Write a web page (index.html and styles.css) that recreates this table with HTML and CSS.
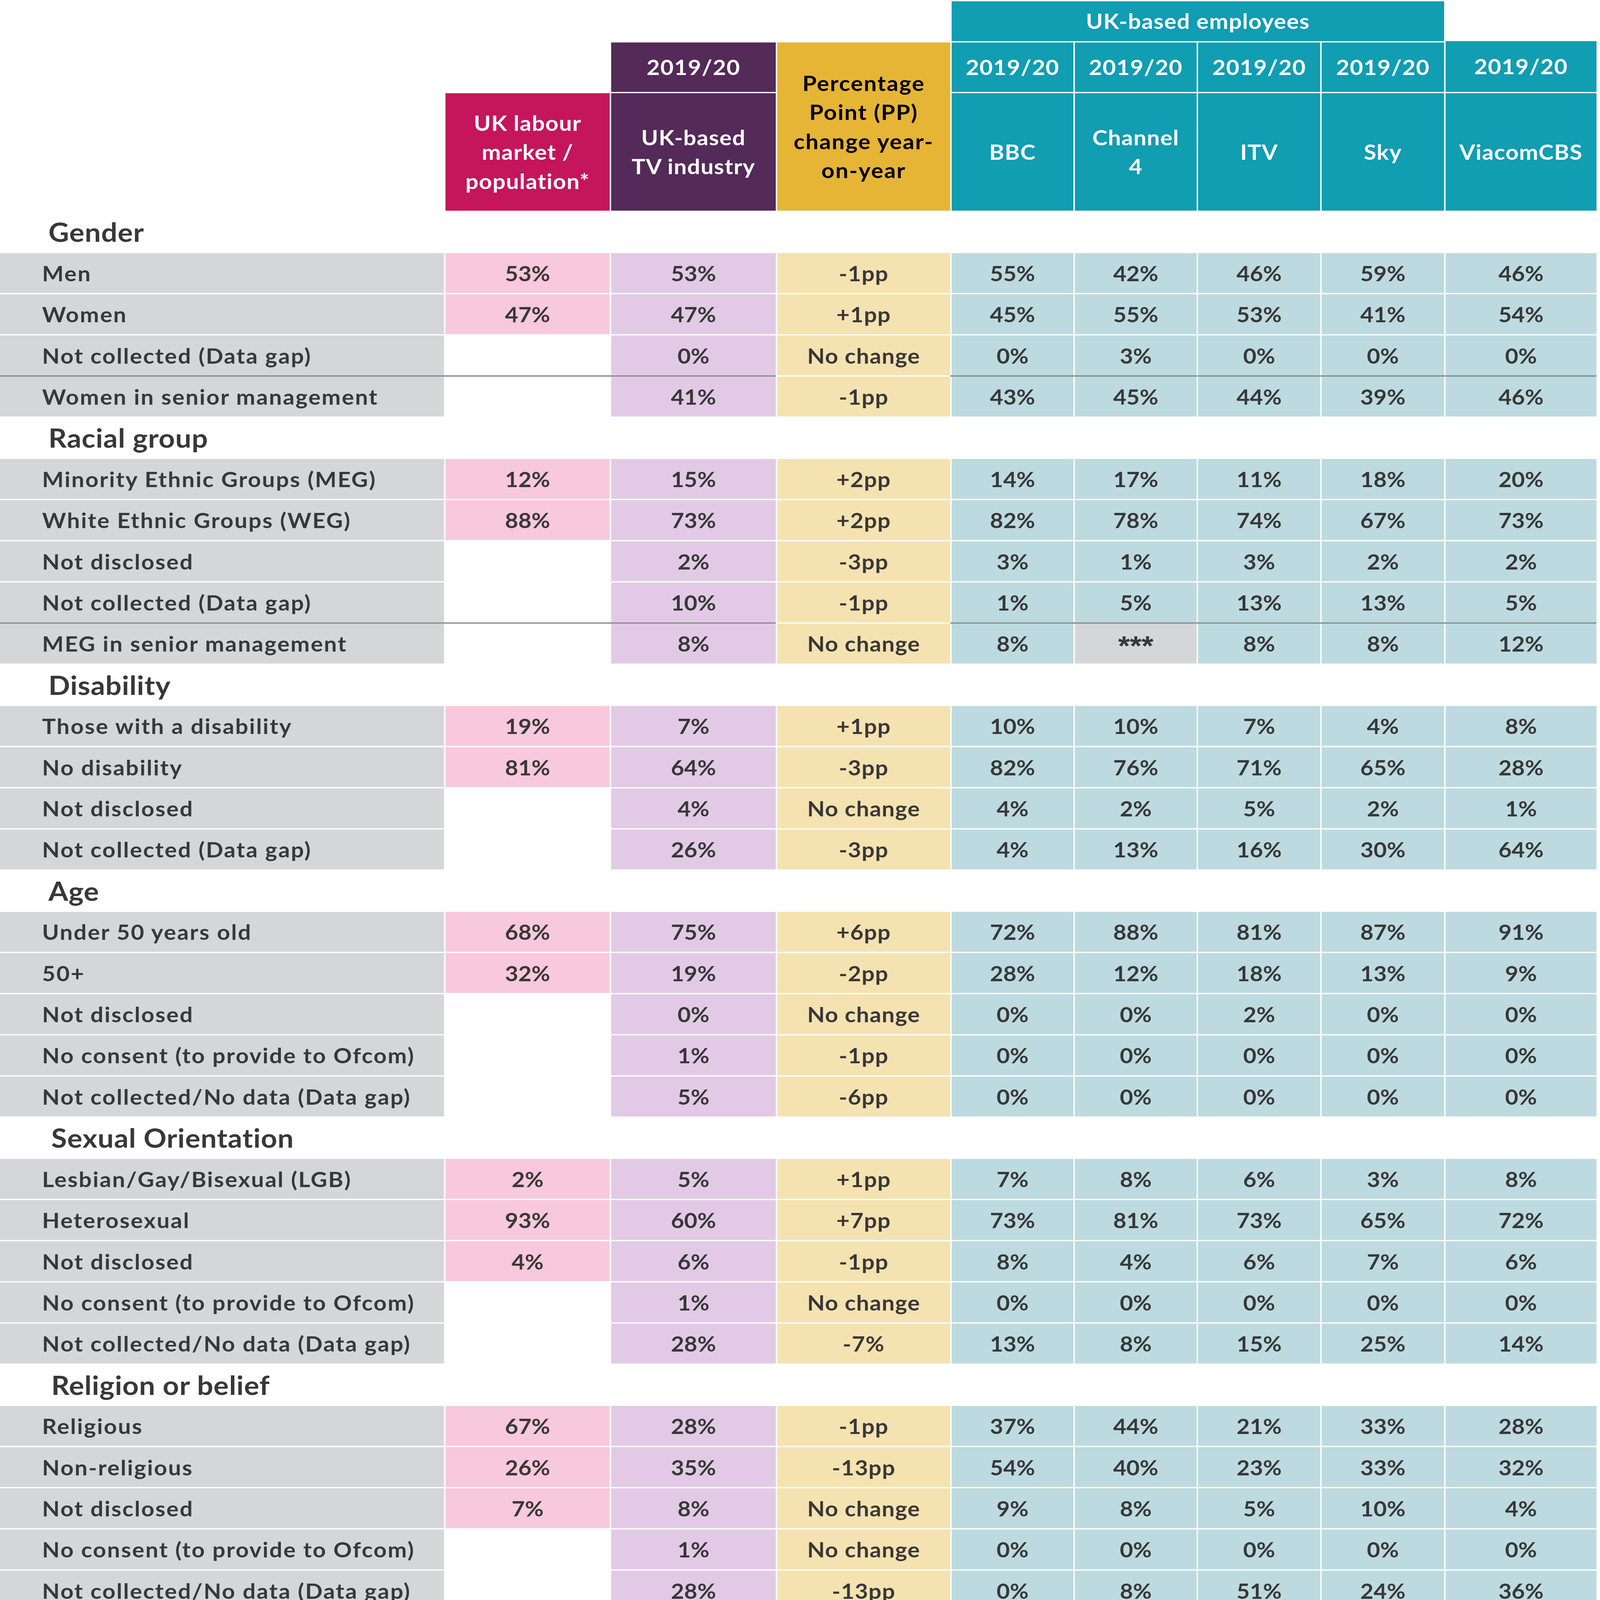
FILE: index.html
```html
<!DOCTYPE html>
<html lang="en">
<head>
<meta charset="utf-8">
<title>UK-based TV industry diversity 2019/20</title>
<link rel="stylesheet" href="styles.css">
</head>
<body>
<div class="frame">
<div class="sheet">
  <div class="head">
    <div class="hc teal h-emp">UK-based employees</div>
    <div class="hc plum h-y3">2019/20</div>
    <div class="hc gold h-pp">Percentage<br>Point (PP)<br>change year-<br>on-year</div>
    <div class="hc teal h-y5">2019/20</div>
    <div class="hc teal h-y6">2019/20</div>
    <div class="hc teal h-y7">2019/20</div>
    <div class="hc teal h-y8">2019/20</div>
    <div class="hc teal h-y9">2019/20</div>
    <div class="hc rose h-t2">UK labour<br>market /<br>population*</div>
    <div class="hc plum h-t3">UK-based<br>TV industry</div>
    <div class="hc teal h-t5">BBC</div>
    <div class="hc teal h-t6">Channel<br>4</div>
    <div class="hc teal h-t7">ITV</div>
    <div class="hc teal h-t8">Sky</div>
    <div class="hc teal h-t9">ViacomCBS</div>
  </div>

  <div class="body">
    <div class="sec sec-a">Gender</div>
    <div class="c lab">Men</div><div class="c pk">53%</div><div class="c pu">53%</div><div class="c ye">-1pp</div><div class="c te">55%</div><div class="c te">42%</div><div class="c te">46%</div><div class="c te">59%</div><div class="c te">46%</div>
    <div class="c lab">Women</div><div class="c pk">47%</div><div class="c pu">47%</div><div class="c ye">+1pp</div><div class="c te">45%</div><div class="c te">55%</div><div class="c te">53%</div><div class="c te">41%</div><div class="c te">54%</div>
    <div class="c lab">Not collected (Data gap)</div><div class="c em"></div><div class="c pu">0%</div><div class="c ye">No change</div><div class="c te">0%</div><div class="c te">3%</div><div class="c te">0%</div><div class="c te">0%</div><div class="c te">0%</div>
    <div class="c lab sep">Women in senior management</div><div class="c em sep"></div><div class="c pu sep">41%</div><div class="c ye">-1pp</div><div class="c te sep">43%</div><div class="c te sep">45%</div><div class="c te sep">44%</div><div class="c te sep">39%</div><div class="c te sep">46%</div>

    <div class="sec sec-a">Racial group</div>
    <div class="c lab">Minority Ethnic Groups (MEG)</div><div class="c pk">12%</div><div class="c pu">15%</div><div class="c ye">+2pp</div><div class="c te">14%</div><div class="c te">17%</div><div class="c te">11%</div><div class="c te">18%</div><div class="c te">20%</div>
    <div class="c lab">White Ethnic Groups (WEG)</div><div class="c pk">88%</div><div class="c pu">73%</div><div class="c ye">+2pp</div><div class="c te">82%</div><div class="c te">78%</div><div class="c te">74%</div><div class="c te">67%</div><div class="c te">73%</div>
    <div class="c lab">Not disclosed</div><div class="c em"></div><div class="c pu">2%</div><div class="c ye">-3pp</div><div class="c te">3%</div><div class="c te">1%</div><div class="c te">3%</div><div class="c te">2%</div><div class="c te">2%</div>
    <div class="c lab">Not collected (Data gap)</div><div class="c em"></div><div class="c pu">10%</div><div class="c ye">-1pp</div><div class="c te">1%</div><div class="c te">5%</div><div class="c te">13%</div><div class="c te">13%</div><div class="c te">5%</div>
    <div class="c lab sep">MEG in senior management</div><div class="c em sep"></div><div class="c pu sep">8%</div><div class="c ye">No change</div><div class="c te sep">8%</div><div class="c na sep">***</div><div class="c te sep">8%</div><div class="c te sep">8%</div><div class="c te sep">12%</div>

    <div class="sec sec-a">Disability</div>
    <div class="c lab">Those with a disability</div><div class="c pk">19%</div><div class="c pu">7%</div><div class="c ye">+1pp</div><div class="c te">10%</div><div class="c te">10%</div><div class="c te">7%</div><div class="c te">4%</div><div class="c te">8%</div>
    <div class="c lab">No disability</div><div class="c pk">81%</div><div class="c pu">64%</div><div class="c ye">-3pp</div><div class="c te">82%</div><div class="c te">76%</div><div class="c te">71%</div><div class="c te">65%</div><div class="c te">28%</div>
    <div class="c lab">Not disclosed</div><div class="c em"></div><div class="c pu">4%</div><div class="c ye">No change</div><div class="c te">4%</div><div class="c te">2%</div><div class="c te">5%</div><div class="c te">2%</div><div class="c te">1%</div>
    <div class="c lab">Not collected (Data gap)</div><div class="c em"></div><div class="c pu">26%</div><div class="c ye">-3pp</div><div class="c te">4%</div><div class="c te">13%</div><div class="c te">16%</div><div class="c te">30%</div><div class="c te">64%</div>

    <div class="sec sec-a">Age</div>
    <div class="c lab">Under 50 years old</div><div class="c pk">68%</div><div class="c pu">75%</div><div class="c ye">+6pp</div><div class="c te">72%</div><div class="c te">88%</div><div class="c te">81%</div><div class="c te">87%</div><div class="c te">91%</div>
    <div class="c lab">50+</div><div class="c pk">32%</div><div class="c pu">19%</div><div class="c ye">-2pp</div><div class="c te">28%</div><div class="c te">12%</div><div class="c te">18%</div><div class="c te">13%</div><div class="c te">9%</div>
    <div class="c lab">Not disclosed</div><div class="c em"></div><div class="c pu">0%</div><div class="c ye">No change</div><div class="c te">0%</div><div class="c te">0%</div><div class="c te">2%</div><div class="c te">0%</div><div class="c te">0%</div>
    <div class="c lab">No consent (to provide to Ofcom)</div><div class="c em"></div><div class="c pu">1%</div><div class="c ye">-1pp</div><div class="c te">0%</div><div class="c te">0%</div><div class="c te">0%</div><div class="c te">0%</div><div class="c te">0%</div>
    <div class="c lab">Not collected/No data (Data gap)</div><div class="c em"></div><div class="c pu">5%</div><div class="c ye">-6pp</div><div class="c te">0%</div><div class="c te">0%</div><div class="c te">0%</div><div class="c te">0%</div><div class="c te">0%</div>

    <div class="sec sec-b">Sexual Orientation</div>
    <div class="c lab">Lesbian/Gay/Bisexual (LGB)</div><div class="c pk">2%</div><div class="c pu">5%</div><div class="c ye">+1pp</div><div class="c te">7%</div><div class="c te">8%</div><div class="c te">6%</div><div class="c te">3%</div><div class="c te">8%</div>
    <div class="c lab">Heterosexual</div><div class="c pk">93%</div><div class="c pu">60%</div><div class="c ye">+7pp</div><div class="c te">73%</div><div class="c te">81%</div><div class="c te">73%</div><div class="c te">65%</div><div class="c te">72%</div>
    <div class="c lab">Not disclosed</div><div class="c pk">4%</div><div class="c pu">6%</div><div class="c ye">-1pp</div><div class="c te">8%</div><div class="c te">4%</div><div class="c te">6%</div><div class="c te">7%</div><div class="c te">6%</div>
    <div class="c lab">No consent (to provide to Ofcom)</div><div class="c em"></div><div class="c pu">1%</div><div class="c ye">No change</div><div class="c te">0%</div><div class="c te">0%</div><div class="c te">0%</div><div class="c te">0%</div><div class="c te">0%</div>
    <div class="c lab">Not collected/No data (Data gap)</div><div class="c em"></div><div class="c pu">28%</div><div class="c ye">-7%</div><div class="c te">13%</div><div class="c te">8%</div><div class="c te">15%</div><div class="c te">25%</div><div class="c te">14%</div>

    <div class="sec sec-b">Religion or belief</div>
    <div class="c lab">Religious</div><div class="c pk">67%</div><div class="c pu">28%</div><div class="c ye">-1pp</div><div class="c te">37%</div><div class="c te">44%</div><div class="c te">21%</div><div class="c te">33%</div><div class="c te">28%</div>
    <div class="c lab">Non-religious</div><div class="c pk">26%</div><div class="c pu">35%</div><div class="c ye">-13pp</div><div class="c te">54%</div><div class="c te">40%</div><div class="c te">23%</div><div class="c te">33%</div><div class="c te">32%</div>
    <div class="c lab">Not disclosed</div><div class="c pk">7%</div><div class="c pu">8%</div><div class="c ye">No change</div><div class="c te">9%</div><div class="c te">8%</div><div class="c te">5%</div><div class="c te">10%</div><div class="c te">4%</div>
    <div class="c lab">No consent (to provide to Ofcom)</div><div class="c em"></div><div class="c pu">1%</div><div class="c ye">No change</div><div class="c te">0%</div><div class="c te">0%</div><div class="c te">0%</div><div class="c te">0%</div><div class="c te">0%</div>
    <div class="c lab">Not collected/No data (Data gap)</div><div class="c em"></div><div class="c pu">28%</div><div class="c ye">-13pp</div><div class="c te">0%</div><div class="c te">8%</div><div class="c te">51%</div><div class="c te">24%</div><div class="c te">36%</div>
  </div>
</div>
</div>
</body>
</html>
```

FILE: styles.css
```css
html, body {
  margin: 0;
  padding: 0;
  background: #ffffff;
  overflow: hidden;
}

/* The visible window; the sheet is fitted into it. */
.frame {
  width: 100vw;
  height: 100vh;
  overflow: hidden;
}

/* The sheet is drawn at the design size (4558 x 5013). */
.sheet {
  width: 4558px;
  height: 5013px;
  overflow: hidden;
  padding-top: 4px;
  box-sizing: border-box;
  transform-origin: 0 0;
  font-family: Lato, "Open Sans", "Liberation Sans", sans-serif;
  font-weight: 700;
}

/* The browser window is capped at 4096 x 4096: fit the whole sheet into it. */
@media (max-width: 4557px), (max-height: 5012px) {
  .sheet {
    transform: scale(calc(4096 / 4558), calc(4096 / 5013));
  }
}

.head,
.body {
  display: grid;
  grid-template-columns: 1265px 468px 469px 493px 347px 347px 348px 349px 430px;
  column-gap: 4px;
  row-gap: 4px;
}

.head {
  grid-template-rows: 125px 155px 368px;
}

.body {
  margin-top: 4px;
  grid-auto-rows: 125px;
}

/* ---------- header ---------- */
.hc {
  display: flex;
  align-items: center;
  justify-content: center;
  text-align: center;
  color: #ffffff;
  font-size: 65px;
  line-height: 91px;
  letter-spacing: 1.5px;
}

.teal { background: #119db2; }
.plum { background: #532a58; }
.rose { background: #c5155c; }
.gold { background: #e6b536; color: #000000; letter-spacing: 2.5px; }

.h-emp { grid-column: 5 / 9; grid-row: 1; }
.h-y3 { grid-column: 3; grid-row: 2; }
.h-pp { grid-column: 4; grid-row: 2 / 4; }
.h-y5 { grid-column: 5; grid-row: 2; }
.h-y6 { grid-column: 6; grid-row: 2; }
.h-y7 { grid-column: 7; grid-row: 2; }
.h-y8 { grid-column: 8; grid-row: 2; }
.h-y9 { grid-column: 9; grid-row: 2; margin-top: -4px; }
.h-t2 { grid-column: 2; grid-row: 3; }
.h-t3 { grid-column: 3; grid-row: 3; }
.h-t5 { grid-column: 5; grid-row: 3; }
.h-t6 { grid-column: 6; grid-row: 3; }
.h-t7 { grid-column: 7; grid-row: 3; }
.h-t8 { grid-column: 8; grid-row: 3; }
.h-t9 { grid-column: 9; grid-row: 3; }

/* ---------- body ---------- */
.sec {
  grid-column: 1 / -1;
  display: flex;
  align-items: center;
  font-size: 81px;
  color: #383838;
  letter-spacing: 1px;
}

.sec-a { padding-left: 138px; }
.sec-b { padding-left: 146px; }

.c {
  position: relative;
  display: flex;
  align-items: center;
  justify-content: center;
  font-size: 65px;
  color: #383838;
  white-space: nowrap;
}

.lab {
  justify-content: flex-start;
  padding-left: 120px;
  background: #d5d6d8;
  letter-spacing: 3px;
}

.pk { background: #f8c8dc; }
.pu { background: #e2cae6; }
.ye { background: #f5e2b1; letter-spacing: 1.5px; }
.te { background: #bddae0; }
.na {
  background: #d5d6d8;
  font-family: "Liberation Sans", Arial, sans-serif;
  font-size: 86px;
  align-items: flex-start;
  padding-top: 21px;
  box-sizing: border-box;
}
.em { background: transparent; }

.sep::before {
  content: "";
  position: absolute;
  left: -4px;
  right: 0;
  top: -4px;
  height: 4px;
  background: #878787;
}

.lab.sep::before { left: 0; }
```
